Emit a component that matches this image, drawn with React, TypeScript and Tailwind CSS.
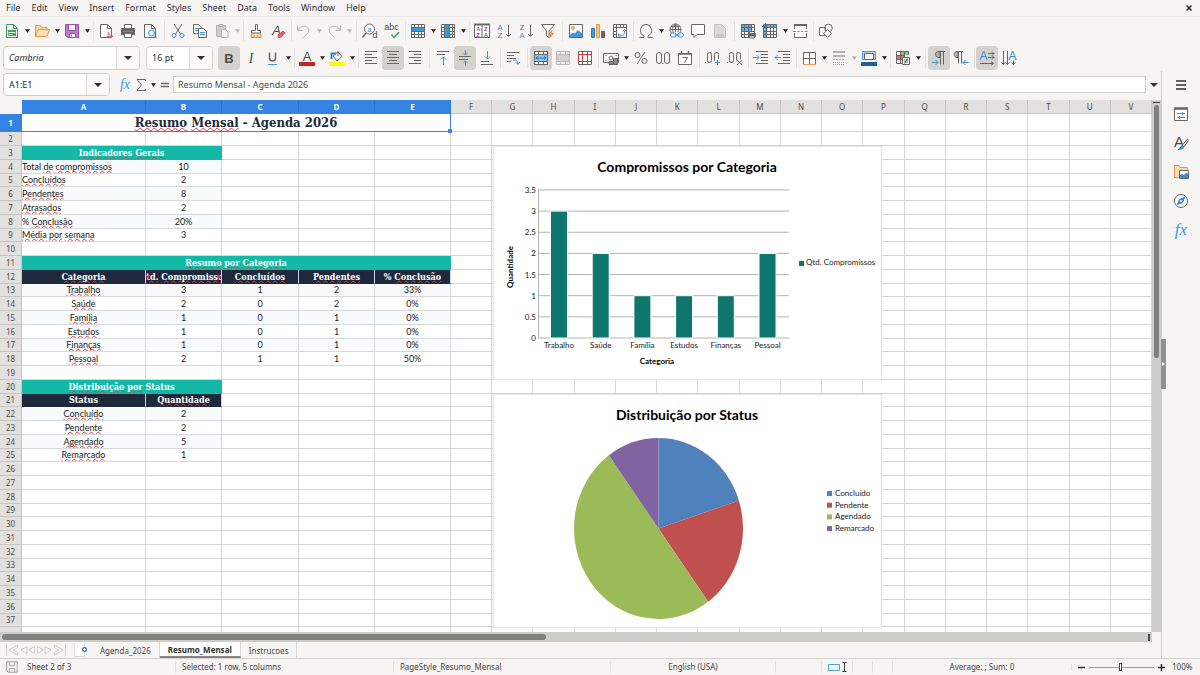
import { useState } from "react";
import type { ReactNode } from "react";
import clsx from "clsx";

const menus = ["File", "Edit", "View", "Insert", "Format", "Styles", "Sheet", "Data", "Tools", "Window", "Help"];
const columns = "ABCDEFGHIJKLMNOPQRSTUV".split("");

type Cell = { text: string; span?: number; kind?: "title" | "band" | "head" | "body" | "left" };

const body = (...values: string[]): Cell[] => values.map((text) => ({ text, kind: "body" }));
const head = (...values: string[]): Cell[] => values.map((text) => ({ text, kind: "head" }));
const indicator = (label: string, value: string): Cell[] => [
  { text: label, kind: "left" },
  { text: value, kind: "body" },
];

// words that start with ~ get the spell check line
const sheet: Record<number, Cell[]> = {
  1: [{ text: "~Resumo ~Mensal - Agenda 2026", span: 5, kind: "title" }],
  3: [{ text: "~Indicadores ~Gerais", span: 2, kind: "band" }],
  4: indicator("Total ~de ~compromissos", "10"),
  5: indicator("~Concluídos", "2"),
  6: indicator("~Pendentes", "8"),
  7: indicator("~Atrasados", "2"),
  8: indicator("% ~Conclusão", "20%"),
  9: indicator("~Média ~por ~semana", "3"),
  11: [{ text: "~Resumo ~por ~Categoria", span: 5, kind: "band" }],
  12: head("~Categoria", "~Qtd. ~Compromissos", "~Concluídos", "~Pendentes", "% ~Conclusão"),
  13: body("~Trabalho", "3", "1", "2", "33%"),
  14: body("~Saúde", "2", "0", "2", "0%"),
  15: body("~Família", "1", "0", "1", "0%"),
  16: body("~Estudos", "1", "0", "1", "0%"),
  17: body("~Finanças", "1", "0", "1", "0%"),
  18: body("~Pessoal", "2", "1", "1", "50%"),
  20: [{ text: "~Distribuição ~por Status", span: 2, kind: "band" }],
  21: head("Status", "~Quantidade"),
  22: body("~Concluído", "2"),
  23: body("~Pendente", "2"),
  24: body("~Agendado", "5"),
  25: body("~Remarcado", "1"),
};

const tinted = [4, 6, 8, 13, 15, 17, 22, 24];

const Icon = ({ children, size = "size-4" }: { children: ReactNode; size?: string }) => (
  <svg viewBox="0 0 16 16" className={clsx("overflow-visible", size)} fill="none" stroke="#686766" strokeWidth="1" aria-hidden="true">
    {children}
  </svg>
);

const Glyph = ({ x, y, s, fill = "#4d4c4b", children, bold, italic, serif }: any) => (
  <text
    x={x}
    y={y}
    fontSize={s}
    fill={fill}
    stroke="none"
    textAnchor="middle"
    fontWeight={bold ? 700 : 400}
    fontStyle={italic ? "italic" : "normal"}
    fontFamily={serif ? "Liberation Serif, serif" : "Liberation Sans, sans-serif"}
  >
    {children}
  </text>
);

const Tool = ({ label, on, children }: { label: string; on?: boolean; children: ReactNode }) => (
  <button
    aria-label={label}
    className={clsx("flex h-6 w-[22px] shrink-0 items-center justify-center rounded", on && "bg-[#d5d2ce]")}
  >
    {children}
  </button>
);

const Drop = ({ label, off }: { label: string; off?: boolean }) => (
  <button aria-label={label + " options"} className="flex h-6 w-2 shrink-0 items-center justify-center">
    <svg viewBox="0 0 6 4" className="h-1 w-[5px]" fill={off ? "#b4b3b1" : "#1c1c1c"}>
      <path d="M0 0h6L3 4z" />
    </svg>
  </button>
);

const Sep = ({ wide }: { wide?: boolean }) => (
  <span className={clsx("flex h-5 shrink-0 justify-center", wide ? "w-1.5" : "w-1")}>
    <span className="w-px bg-[#e3e1df]" />
  </span>
);

const Caret = () => (
  <svg viewBox="0 0 8 4" className="h-1 w-2" fill="#2e2e2e">
    <path d="M0 0h8L4 4z" />
  </svg>
);

const Combo = ({ label, value, className, italic }: { label: string; value: string; className: string; italic?: boolean }) => (
  <div className={clsx("flex shrink-0 overflow-hidden rounded border border-[#cfccc9] bg-white", className)}>
    <input
      aria-label={label}
      defaultValue={value}
      className={clsx("min-w-0 flex-1 bg-transparent pl-[5px] text-[#2b2b2b] outline-none", italic && "italic")}
    />
    <button aria-label={label + " list"} className="flex w-[23px] items-center justify-center border-l border-[#dbd9d6] bg-[#faf9f8]">
      <Caret />
    </button>
  </div>
);

const Lines = ({ rows }: { rows: [number, number][] }) => (
  <path d={rows.map(([from, to], i) => `M${from} ${1.5 + i * 3}H${to}`).join("")} />
);

const GridBase = () => (
  <path d="M1.5 1.5h13v13h-13zM1.5 4.5h13M1.5 8.5h13M1.5 11.5h13M4.5 1.5v13M8.5 1.5v13M11.5 1.5v13" />
);

const StandardBar = () => (
  <div className="flex h-[27px] items-center overflow-hidden pl-px">
    <Tool label="New">
      <Icon>
        <path stroke="#3b9b5c" d="M2.5 1.5h7l4 4v9h-11zM9.5 1.5v4h4" fill="#f3faf5" />
        <path stroke="none" fill="#3ba35d" d="M4 7h8v6H4z" />
        <path stroke="#dff3e5" d="M4.5 9.5h7M4.5 11.5h4" />
      </Icon>
    </Tool>
    <Drop label="New" />
    <Tool label="Open">
      <Icon>
        <path stroke="#dd9a4e" fill="#fbd9a5" d="M1.5 13.5v-11h5l1.5 2h5v2" />
        <path stroke="#dd9a4e" fill="#fcdfae" d="M1.5 13.5l2.500-7h11.500l-2.500 7z" />
      </Icon>
    </Tool>
    <Drop label="Open" />
    <Tool label="Save">
      <Icon>
        <path stroke="#9b4fb0" fill="#c078d0" d="M1.5 1.5h13v13h-11l-2-2z" />
        <path stroke="#9b4fb0" fill="#fff" d="M4.5 1.5h7v6h-7z" />
        <path stroke="#9b4fb0" fill="#fff" d="M5.5 10.5h6v4h-6z" />
        <path stroke="#9b4fb0" d="M7.5 11.5v2" />
      </Icon>
    </Tool>
    <Drop label="Save" />
    <Sep />
    <Tool label="Export as PDF">
      <Icon>
        <path fill="#fff" d="M2.5 1.5h7l4 4v9h-11zM9.5 1.5v4h4" />
        <path stroke="#e0606c" fill="#f6f5f3" d="M8 14.5c2-1 3-3 2.500-5 0-1.500-1-1 0 1s3 3.500 4.500 3c1-1-4.500-.5-7 1z" />
      </Icon>
    </Tool>
    <Tool label="Print">
      <Icon>
        <path fill="#fff" d="M4.5 5v-3.500h7V5" />
        <path fill="#686766" d="M1.5 5.5h13v6h-13z" />
        <path stroke="#4199dc" d="M3 8.5h10" />
        <path fill="#fff" d="M4.5 10.5h7v4h-7z" />
      </Icon>
    </Tool>
    <Tool label="Print Preview">
      <Icon>
        <path fill="#fff" d="M2.5 1.5h7l4 4v9h-11zM9.5 1.5v4h4" />
        <circle cx="9.5" cy="10" r="3" stroke="#3d98db" fill="#e3f1fb" />
        <path stroke="#3d98db" d="M11.5 12l3 3" />
      </Icon>
    </Tool>
    <Sep wide />
    <Tool label="Cut">
      <Icon>
        <path d="M4 1l6.500 10M12 1L5.500 11" />
        <circle cx="4" cy="12.5" r="2" stroke="#2f8fd8" />
        <circle cx="12" cy="12.5" r="2" stroke="#2f8fd8" />
      </Icon>
    </Tool>
    <Tool label="Copy">
      <Icon>
        <path fill="#fff" d="M1.5 1.5h5l3 3v6h-8z" />
        <path stroke="#4199dc" d="M3 5.5h4M3 7.5h4" />
        <path fill="#fff" d="M6.5 5.5h5l3 3v6h-8z" />
        <path stroke="#4199dc" d="M8 9.5h5M8 11.5h5" />
      </Icon>
    </Tool>
    <Tool label="Paste">
      <Icon>
        <path stroke="#b5b3b1" fill="#cfcdcb" d="M2.5 2.5h9v11h-9z" />
        <path stroke="#b5b3b1" fill="#f6f5f3" d="M5 1.5h4v2H5zM7.5 6.5h4l2.500 2.500v5.500H7.500z" />
      </Icon>
    </Tool>
    <Drop label="Paste" off />
    <Sep />
    <Tool label="Clone Formatting">
      <Icon>
        <path fill="#fff" d="M7.5 1.5h2v6h3v2.500h-9V7.500h4z" />
        <path stroke="#de8a3c" fill="#fbd7ae" d="M3.5 10.5h9l.5 4H3z" />
        <path stroke="#de8a3c" d="M6 12.5v2M9.5 12.5v2" />
      </Icon>
    </Tool>
    <Tool label="Clear Direct Formatting">
      <Icon>
        <Glyph x="6.5" y="12" s="13" italic>A</Glyph>
        <path stroke="#d8475a" fill="#ec5f70" d="M8 12l5-4 2 2-4.500 4.500H8.500z" />
      </Icon>
    </Tool>
    <Sep />
    <Tool label="Undo">
      <Icon>
        <path stroke="#b5b3b1" d="M1.5 2.5v5h5M2 7c2-4 7-5 9.500-2.500S12.500 10 7.500 14.500" />
      </Icon>
    </Tool>
    <Drop label="Undo" off />
    <Tool label="Redo">
      <Icon>
        <path stroke="#b5b3b1" d="M14.5 2.5v5h-5M14 7c-2-4-7-5-9.500-2.500S3.500 10 8.500 14.500" />
      </Icon>
    </Tool>
    <Drop label="Redo" off />
    <Sep wide />
    <Tool label="Find and Replace">
      <Icon>
        <circle cx="7.5" cy="6" r="5" fill="#fff" />
        <path strokeWidth="1.5" d="M4 10l-3.500 4.500" />
        <Glyph x="7.5" y="8.5" s="8" fill="#2f8fd8">a</Glyph>
        <Glyph x="13" y="15" s="9">d</Glyph>
      </Icon>
    </Tool>
    <Tool label="Spelling">
      <Icon>
        <Glyph x="7.5" y="6.5" s="9">abc</Glyph>
        <path stroke="#3aa55f" strokeWidth="1.5" d="M7.5 11.5l2.500 3 5-5.500" />
      </Icon>
    </Tool>
    <Sep />
    <Tool label="Row">
      <Icon>
        <path stroke="none" fill="#3d98db" d="M1 4h14v5H1z" />
        <path d="M1.5 1.5h13v13h-13zM1.5 4.5h13M1.5 8.5h13M1.5 11.5h13M4.5 1.5v3M8.5 1.5v3M11.5 1.5v3M4.5 8.5v6M8.5 8.5v6M11.5 8.5v6" />
      </Icon>
    </Tool>
    <Drop label="Row" />
    <Tool label="Column">
      <Icon>
        <path stroke="none" fill="#3d98db" d="M5 1h5v14H5z" />
        <path d="M1.5 1.5h13v13h-13zM1.5 4.5h3M1.5 8.5h3M1.5 11.5h3M9.5 4.5h5M9.5 8.5h5M9.5 11.5h5M4.5 1.5v13M9.5 1.5v13M12.5 1.5v13" />
      </Icon>
    </Tool>
    <Drop label="Column" />
    <Sep />
    <Tool label="Sort">
      <Icon>
        <path fill="#fff" d="M.5 1.5h15v13H.5zM8 1.5v13" />
        <path strokeWidth="2" d="M0 1.500h16" />
        <Glyph x="4.2" y="8" s="6" fill="#2f8fd8" bold>A</Glyph>
        <Glyph x="4.2" y="14" s="6" fill="#a23dbb" bold>Z</Glyph>
        <Glyph x="11.8" y="8" s="6" fill="#a23dbb" bold>Z</Glyph>
        <Glyph x="11.8" y="14" s="6" fill="#2f8fd8" bold>A</Glyph>
      </Icon>
    </Tool>
    <Tool label="Sort Ascending">
      <Icon>
        <Glyph x="4" y="6.5" s="7.5" fill="#2f8fd8">A</Glyph>
        <Glyph x="4" y="15" s="7.5" fill="#a23dbb">Z</Glyph>
        <path d="M12.5 2v11.500M10 11l2.500 2.500L15 11" />
      </Icon>
    </Tool>
    <Tool label="Sort Descending">
      <Icon>
        <Glyph x="4" y="6.5" s="7.5" fill="#a23dbb">Z</Glyph>
        <Glyph x="4" y="15" s="7.5" fill="#2f8fd8">A</Glyph>
        <path d="M12.5 2v11.500M10 11l2.500 2.500L15 11" />
      </Icon>
    </Tool>
    <Tool label="AutoFilter">
      <Icon>
        <path fill="#fff" d="M1.5 1.5h13L9 8v6.500l-2.500-2V8z" />
        <path stroke="#e09238" fill="#f7b45d" d="M12 7.5L8.500 12h2l-1 3 4-4.500h-2z" />
      </Icon>
    </Tool>
    <Sep wide />
    <Tool label="Insert Image">
      <Icon>
        <path fill="#fff" d="M1.5 1.5h13v13h-13z" />
        <path stroke="none" fill="#3d98db" d="M2 12l3-2.500 1.500 1L10 7l4 3.500V14H2z" />
        <circle cx="5" cy="5" r="1.5" stroke="#e6a04a" fill="#f8c77e" />
      </Icon>
    </Tool>
    <Tool label="Insert Chart">
      <Icon>
        <path stroke="#2b7fc4" fill="#3d98db" d="M1.5 5.5h3v9h-3z" />
        <path stroke="#de9a46" fill="#f9c67c" d="M6.5 1.5h3v13h-3z" />
        <path fill="#686766" d="M11.5 8.5h3v6h-3z" />
      </Icon>
    </Tool>
    <Tool label="Insert Pivot Table">
      <Icon>
        <path fill="#fff" d="M1.5 1.5h13v13h-13z" />
        <path d="M1.5 4.5h13M4.5 1.5v13M8.5 1.5v3M11.5 1.5v3M1.5 8.5h3M1.5 11.5h3" />
        <path stroke="#3d98db" d="M6.5 10.5v2.500h2.500c3 0 3.500-2 3.500-5M10.500 8.500l2-2 2 2M8.500 11l-2 2" />
      </Icon>
    </Tool>
    <Sep />
    <Tool label="Special Character">
      <Icon>
        <path d="M1.5 14.5H6v-1.500C3 11.500 2.500 9.500 2.500 7.500c0-3.500 2.500-6 5.500-6s5.500 2.500 5.500 6c0 2-.5 4-3.500 5.500v1.500h4.500" />
      </Icon>
    </Tool>
    <Drop label="Special Character" />
    <Tool label="Hyperlink">
      <Icon>
        <circle cx="7.5" cy="6.5" r="5.5" />
        <path d="M2 6.5h11M7.5 1v8M3 3.5h9M5.5 10c-1.500-3-1.500-6 2-9 3.500 3 3.500 5 2.500 8" />
        <rect x="2.5" y="10" width="6" height="4" rx="2" stroke="#3d98db" fill="#f6f5f3" />
        <rect x="9.5" y="10" width="6" height="4" rx="2" stroke="#3d98db" fill="#f6f5f3" />
        <path stroke="#3d98db" d="M6.5 12h5" />
      </Icon>
    </Tool>
    <Tool label="Comment">
      <Icon>
        <path fill="#fff" d="M1.5 1.5h13v10H7l-3 3v-3H1.500z" />
      </Icon>
    </Tool>
    <Tool label="Headers and Footers">
      <Icon>
        <path stroke="#c4c2c0" fill="#dcdad8" d="M2.5 1.5h7l4 4v9h-11z" />
        <path stroke="#c4c2c0" d="M4 12.5h8" strokeWidth="2" />
      </Icon>
    </Tool>
    <Sep wide />
    <Tool label="Define Print Area">
      <Icon>
        <path stroke="none" fill="#5fb0e8" d="M1 1h10v7H1z" />
        <GridBase />
        <path fill="#686766" d="M8.5 10.5h7v3h-7z" />
        <path fill="#fff" d="M9.5 8.5h5v2h-5zM9.5 13h5v2h-5z" />
      </Icon>
    </Tool>
    <Tool label="Freeze Rows and Columns">
      <Icon>
        <path stroke="none" fill="#5fb0e8" d="M2 1h13v4H5v10H2z" />
        <GridBase />
        <path stroke="#2677bd" d="M0 3.5h4M3.5 0v4" />
      </Icon>
    </Tool>
    <Drop label="Freeze Rows and Columns" />
    <Tool label="Split Window">
      <Icon>
        <path fill="#fff" stroke="none" d="M2 2h12v12H2z" />
        <path d="M2.5 6V1.500h12V6M2.500 10v4.500h12V10" />
        <path strokeWidth="2" d="M2 2h13" />
        <path stroke="#3d98db" d="M1 8.5h3M5.5 8.5h2M9 8.5h2M12.5 8.5h3" />
      </Icon>
    </Tool>
    <Sep />
    <Tool label="Show Draw Functions">
      <Icon>
        <path d="M1.5 4.5h6v8h-6z" />
        <circle cx="10.5" cy="5" r="3.8" />
        <path fill="#f6f5f3" d="M9.5 6.5l4 4-4 4-4-4z" />
      </Icon>
    </Tool>
  </div>
);

const FormattingBar = () => (
  <div className="flex h-[27px] items-center overflow-hidden pl-[3px]">
    <Combo label="Font Name" value="Cambria" italic className="mr-1.5 h-6 w-[137px]" />
    <Combo label="Font Size" value="16 pt" className="mr-[5px] h-6 w-[67px]" />
    <Tool label="Bold" on>
      <Icon><Glyph x="8" y="12.5" s="13" bold>B</Glyph></Icon>
    </Tool>
    <Tool label="Italic">
      <Icon><Glyph x="8" y="12.5" s="14" italic serif>I</Glyph></Icon>
    </Tool>
    <Tool label="Underline">
      <Icon>
        <path strokeWidth="1.5" d="M4.5 2.5v5.500c0 4 6 4 6 0V2.500" />
        <path stroke="#3d98db" d="M3 14.5h9" />
      </Icon>
    </Tool>
    <Drop label="Underline" />
    <Sep />
    <Tool label="Font Color">
      <Icon>
        <Glyph x="8" y="11" s="13">A</Glyph>
        <path stroke="#c9211e" strokeWidth="4" d="M0 14h16" />
      </Icon>
    </Tool>
    <Drop label="Font Color" />
    <Tool label="Highlighting">
      <Icon>
        <path fill="#fff" d="M4 6l5-4 4 4.500-5 4.500z" />
        <path d="M9 1v5" />
        <path stroke="#2b7fc4" strokeWidth="1.8" d="M2.5 9V3.500H7" />
        <path stroke="#ffff00" strokeWidth="4" d="M0 14h16" />
      </Icon>
    </Tool>
    <Drop label="Highlighting" />
    <Sep />
    <Tool label="Align Left">
      <Icon><Lines rows={[[2, 14], [2, 9], [2, 14], [2, 9], [2, 14]]} /></Icon>
    </Tool>
    <Tool label="Center Horizontally" on>
      <Icon><Lines rows={[[2, 14], [4, 12], [2, 14], [4, 12], [2, 14]]} /></Icon>
    </Tool>
    <Tool label="Align Right">
      <Icon><Lines rows={[[2, 14], [7, 14], [2, 14], [7, 14], [2, 14]]} /></Icon>
    </Tool>
    <Sep wide />
    <Tool label="Align Top">
      <Icon>
        <path d="M2 1.5h12M2 4.5h8" />
        <path stroke="#3d98db" d="M8.5 15V7M6 9.5L8.500 7l2.500 2.500" />
      </Icon>
    </Tool>
    <Tool label="Center Vertically" on>
      <Icon>
        <path d="M2 6.5h12M2 9.5h9" />
        <path stroke="#3d98db" d="M8.5 0v5M6.5 3l2 2 2-2M8.500 16v-5M6.500 13l2-2 2 2" />
      </Icon>
    </Tool>
    <Tool label="Align Bottom">
      <Icon>
        <path d="M2 11.5h8M2 14.5h12" />
        <path stroke="#3d98db" d="M8.5 1v8M6 6.5L8.500 9 11 6.500" />
      </Icon>
    </Tool>
    <Sep />
    <Tool label="Wrap Text">
      <Icon>
        <path d="M2 2.5h12M2 5.5h7M2 8.5h9M2 11.5h4" />
        <path stroke="#3d98db" d="M8 10.5c3-1 4.500 0 5 3.500M10.500 12l2.500 2.500 2-2.500" />
      </Icon>
    </Tool>
    <Sep wide />
    <Tool label="Merge and Center Cells" on>
      <Icon>
        <path fill="#fff" d="M1.5 1.5h13v13h-13z" />
        <path stroke="none" fill="#8cc6f0" d="M2 5h12v6H2z" />
        <path d="M1.5 1.5h13v13h-13zM1.5 4.5h13M1.5 11.5h13M5.5 1.5v3M10.5 1.5v3M5.5 11.5v3M10.5 11.5v3" />
        <path stroke="#2476bb" d="M3 8h10M5 6.5L3 8l2 1.500M11 6.500L13 8l-2 1.500" />
      </Icon>
    </Tool>
    <Tool label="Merge Cells">
      <Icon>
        <path stroke="none" fill="#d4d2d0" d="M2 5h12v6H2z" />
        <path stroke="#bbb9b7" d="M1.5 1.5h13v13h-13zM1.5 4.5h13M1.5 11.5h13M5.5 1.5v3M10.5 1.5v3M5.5 11.5v3M10.5 11.5v3" />
      </Icon>
    </Tool>
    <Tool label="Unmerge Cells">
      <Icon>
        <path fill="#fff" d="M1.5 1.5h13v13h-13zM5.5 1.5v3M10.5 1.5v3M5.5 11.5v3M10.5 11.5v3" />
        <path stroke="#d8383f" d="M1.5 4.5h13v7h-13zM5.5 4.5v7M10.5 4.5v7" />
      </Icon>
    </Tool>
    <Sep />
    <Tool label="Format as Currency">
      <Icon>
        <path fill="#fff" d="M.5 3.5h15v9H.5z" />
        <circle cx="8" cy="8" r="2" />
        <path d="M2.5 5.5h1M12.5 5.5h1M2.5 10.5h1" />
        <path fill="#8a8987" d="M6 11.5h4v3H6zM10.5 8.5h4v6h-4z" />
      </Icon>
    </Tool>
    <Drop label="Format as Currency" />
    <Tool label="Format as Percent">
      <Icon>
        <circle cx="4.5" cy="5" r="2.5" />
        <circle cx="11.5" cy="11" r="2.5" />
        <path d="M12 2L4 14" />
      </Icon>
    </Tool>
    <Tool label="Format as Number">
      <Icon>
        <rect x="1.5" y="2.5" width="5" height="11" rx="2.5" />
        <rect x="9.5" y="2.5" width="5" height="11" rx="2.5" />
        <path d="M7.5 13.5h1" />
      </Icon>
    </Tool>
    <Tool label="Format as Date">
      <Icon>
        <path fill="#fff" d="M1.5 3.5h13v11h-13z" />
        <path strokeWidth="1.5" d="M1.5 4h13M4.5 1v3M11.5 1v3" />
        <path d="M5.5 7.5h5L7.500 13" />
      </Icon>
    </Tool>
    <Sep wide />
    <Tool label="Add Decimal Place">
      <Icon>
        <rect x="2.5" y="2.5" width="4" height="10" rx="2" />
        <rect x="9.5" y="2.5" width="4" height="10" rx="2" />
        <path d="M0 12.5h1" />
        <path stroke="#f6f5f3" strokeWidth="3" d="M9 12.5h7M12.5 9v6" />
        <path stroke="#2f8fd8" d="M10 12.5h5M12.5 10v5" />
      </Icon>
    </Tool>
    <Tool label="Delete Decimal Place">
      <Icon>
        <rect x="2.5" y="2.5" width="4" height="10" rx="2" />
        <rect x="9.5" y="2.5" width="4" height="10" rx="2" />
        <path d="M0 12.5h1" />
        <path stroke="#f6f5f3" strokeWidth="3" d="M10 10l5 5M15 10l-5 5" />
        <path stroke="#e03c44" d="M10 10l5 5M15 10l-5 5" />
      </Icon>
    </Tool>
    <Sep />
    <Tool label="Increase Indent">
      <Icon>
        <path d="M3 1.5h12M8 4.5h7M8 7.5h7M8 10.5h7M3 13.5h12" />
        <path stroke="#3d98db" d="M0 7.5h6M3.500 5L6 7.500 3.500 10" />
      </Icon>
    </Tool>
    <Tool label="Decrease Indent">
      <Icon>
        <path d="M3 1.5h12M8 4.5h7M8 7.5h7M8 10.5h7M3 13.5h12" />
        <path stroke="#3d98db" d="M0 7.5h6M2.500 5L0 7.500 2.500 10" />
      </Icon>
    </Tool>
    <Sep />
    <Tool label="Borders">
      <Icon>
        <path fill="#fff" d="M2.5 14V2.500h12V14M8.500 2.500V14M2.500 8.500h12" />
        <path stroke="#e8a35b" d="M2 14.5h13" />
      </Icon>
    </Tool>
    <Drop label="Borders" />
    <Tool label="Border Style">
      <Icon>
        <path stroke="#b5b3b1" strokeWidth="2" d="M2 2h12M2 6h12" />
        <path stroke="#b5b3b1" strokeDasharray="2 1" d="M2 9.5h12" />
        <path stroke="#b5b3b1" strokeDasharray="1 1" d="M2 12.5h12M2 14.5h12" />
      </Icon>
    </Tool>
    <Drop label="Border Style" off />
    <Tool label="Border Color">
      <Icon>
        <path stroke="#3d98db" fill="#cbd5de" d="M1.5 1.5h13v8h-13z" />
        <path fill="#fff" d="M3.500 3.500h9v6h-9z" />
        <path stroke="#1f5fa0" strokeWidth="4" d="M0 14h16" />
      </Icon>
    </Tool>
    <Drop label="Border Color" />
    <Sep />
    <Tool label="Conditional Formatting">
      <Icon>
        <path stroke="none" fill="#7cc48f" d="M5 1h9v4H5z" />
        <path stroke="none" fill="#e8686c" d="M1 5h4v5H1zM5 5h4v4H5z" />
        <path d="M1.5 1.5h12v3M1.5 1.5v12h6M1.5 5.5h8M1.5 9.5h6M5.5 1.5v12M9.5 1.5V7" />
        <path fill="#fff" d="M7.5 7.5h7v7h-7z" />
        <path d="M9 10h4M9 12h4M12.5 8.5l-3 5" />
      </Icon>
    </Tool>
    <Drop label="Conditional Formatting" />
    <Sep wide />
    <Tool label="Left-To-Right" on>
      <Icon>
        <path fill="#b3b1ae" d="M9 1.5H7C3.500 1.500 3.500 7.500 8 7.500h1z" />
        <path d="M7 1.5h7M9.5 1.5v13M12.5 1.5v13" />
        <path stroke="#2f8fd8" d="M1 12.5h5.500M4.500 10l2.500 2.500L4.500 15" />
      </Icon>
    </Tool>
    <Tool label="Right-To-Left">
      <Icon>
        <path fill="#b3b1ae" d="M5 1.5H4C0 1.500 .5 7.500 4 7.500h1z" />
        <path d="M4 1.5h6M5.5 1.5v12M8.500 1.500v12" />
        <path stroke="#2f8fd8" d="M10 12.5h5.500M12.500 10L10 12.500l2.500 2.500" />
      </Icon>
    </Tool>
    <Sep />
    <Tool label="Text direction from left to right" on>
      <Icon>
        <Glyph x="4.5" y="9.5" s="12" fill="#2f8fd8">A</Glyph>
        <path d="M9 3.5h6M13 1.5l2 2-2 2M9 7.5h6M13 5.5l2 2-2 2M1 13.5h13.500M12 11.500l2.500 2-2.500 2" />
      </Icon>
    </Tool>
    <Tool label="Text direction from top to bottom">
      <Icon>
        <Glyph x="11.5" y="9.5" s="12" fill="#2f8fd8">A</Glyph>
        <path d="M2.5 1v13.500M.5 12.500l2 2 2-2M6.500 1v13.500M4.500 12.500l2 2 2-2M12.500 10.500v4M10.500 12.500l2 2 2-2" />
      </Icon>
    </Tool>
  </div>
);

const FormulaBar = () => (
  <div className="flex h-[29px] shrink-0 items-center pb-0.5 pl-[3px]">
    <Combo label="Name Box" value="A1:E1" className="mr-[7px] h-[23px] w-[107px]" />
    <button aria-label="Function Wizard" className="flex w-4 justify-center">
      <Icon><Glyph x="8" y="12" s="14" fill="#3d98db" italic serif>fx</Glyph></Icon>
    </button>
    <button aria-label="Select Function" className="flex w-4 justify-center">
      <Icon>
        <path d="M12.5 4V2.500H4L8.500 8 4 13.500h8.500V12" />
      </Icon>
    </button>
    <Drop label="Select Function" />
    <button aria-label="Formula" className="flex w-4 justify-center">
      <Icon><path strokeWidth="1.5" d="M4 6.5h8M4 9.5h8" /></Icon>
    </button>
    <input
      aria-label="Input line"
      defaultValue="Resumo Mensal - Agenda 2026"
      className="h-[17px] min-w-0 flex-1 border border-[#d4d2d0] bg-white pl-1 text-[#4a4a4a] outline-none"
    />
    <button aria-label="Expand Formula Bar" className="flex w-[15px] justify-center">
      <Caret />
    </button>
  </div>
);

const Spelled = ({ text }: { text: string }) => (
  <>
    {text.split(" ").map((word, i) => (
      <span key={i}>
        {i > 0 && " "}
        {word.startsWith("~") ? (
          <span className="underline decoration-[#e0383e] decoration-wavy decoration-1 underline-offset-0 [text-decoration-skip-ink:none]">
            {word.slice(1)}
          </span>
        ) : (
          word
        )}
      </span>
    ))}
  </>
);

const cellStyles = {
  title: "border-[#3584e4] font-['DejaVu_Serif_Condensed','DejaVu_Serif',serif] text-[13px] leading-[17px] font-bold text-[#1e293b]",
  band: "border-[#14b8a6] bg-[#14b8a6] font-['DejaVu_Serif_Condensed','DejaVu_Serif',serif] text-[9px] leading-[12px] font-bold text-white",
  head: "border-[#cbd5e1] border-b-[#1e293b] bg-[#1e293b] font-['DejaVu_Serif_Condensed','DejaVu_Serif',serif] text-[9px] leading-[12px] font-bold text-white",
  body: "border-[#d5d8dc] font-[Lato,sans-serif] text-[9px] leading-[12px] text-[#222]",
  left: "border-[#d5d8dc] font-[Lato,sans-serif] text-[9px] leading-[12px] text-[#222]",
};

const Row = ({ n }: { n: number }) => {
  const cells = sheet[n] ?? [];
  const used = cells.reduce((sum, c) => sum + (c.span ?? 1), 0);
  return (
    <tr className={clsx(n === 1 ? "h-[18px]" : n % 4 === 1 ? "h-[13px]" : "h-[14px]")}>
      <th
        scope="row"
        className={clsx(
          "border-r border-b p-0 text-center text-[8px] leading-[12px]",
          n === 1 ? "border-[#3584e4] bg-[#3584e4] font-bold text-white" : "border-[#c6c5c3] bg-[#e2e1df] font-normal text-[#4b4a49]",
        )}
      >
        {n < 38 && n}
      </th>
      {cells.map((cell, i) => (
        <td
          key={i}
          colSpan={cell.span}
          className={clsx(
            "relative border-r border-b p-0",
            cellStyles[cell.kind ?? "body"],
            tinted.includes(n) && "bg-[#f8fafc]",
          )}
        >
          <div className={clsx("flex overflow-hidden whitespace-pre", n === 1 ? "h-[17px]" : "h-[12px]", cell.kind !== "left" && "justify-center")}>
            <span className="shrink-0">
              <Spelled text={cell.text} />
            </span>
          </div>
          {cell.kind === "title" && (
            <span className="absolute -right-0.5 -bottom-0.5 size-1 bg-[#3584e4]" />
          )}
          {cell.text.includes("Qtd") && (
            <>
              <svg viewBox="0 0 3 6" className="absolute top-1 left-0 h-1.5 w-[3px]" fill="#e0383e"><path d="M3 0v6L0 3z" /></svg>
              <svg viewBox="0 0 3 6" className="absolute top-1 right-0 h-1.5 w-[3px]" fill="#e0383e"><path d="M0 0v6l3-3z" /></svg>
            </>
          )}
        </td>
      ))}
      {columns.slice(used).map((c) => (
        <td key={c} className="border-r border-b border-[#d4d4d4] p-0" />
      ))}
    </tr>
  );
};

const Grid = () => (
  <table className="w-full table-fixed border-separate border-spacing-0 bg-white">
    <colgroup>
      <col className="w-[22px]" />
      <col className="w-[124px]" />
      <col className="w-[76px]" />
      <col className="w-[77px]" />
      <col className="w-[76px]" />
      <col className="w-[76px]" />
      {columns.slice(5).map((c) => (
        <col key={c} />
      ))}
    </colgroup>
    <thead>
      <tr className="h-[14px]">
        <td className="bg-[#f6f5f3] p-0" />
        {columns.map((c, i) => (
          <th
            key={c}
            scope="col"
            className={clsx(
              "border-r border-b p-0 text-center text-[8px] leading-[12px]",
              i < 5 ? "border-r-[#2c74cc] border-b-[#3584e4] bg-[#3584e4] font-bold text-white" : "border-[#c6c5c3] bg-[#e2e1df] font-normal text-[#4b4a49]",
            )}
          >
            {c}
          </th>
        ))}
      </tr>
    </thead>
    <tbody>
      {Array.from({ length: 38 }, (_, i) => (
        <Row key={i} n={i + 1} />
      ))}
    </tbody>
  </table>
);

const bars: [string, number][] = [
  ["Trabalho", 3],
  ["Saúde", 2],
  ["Família", 1],
  ["Estudos", 1],
  ["Finanças", 1],
  ["Pessoal", 2],
];

const BarChart = () => {
  const y = (v: number) => 192 - v * 42.3;
  return (
    <svg viewBox="0 0 389 234" className="absolute top-[46px] left-[493px] h-[234px] w-[389px] bg-white font-[Lato,sans-serif] text-[8px]" fill="#222">
      <rect x=".5" y=".5" width="388" height="233" fill="none" stroke="#e2e2e2" />
      <text x="194" y="26" textAnchor="middle" className="text-[14px] font-bold" fill="#000">Compromissos por Categoria</text>
      {[0, 0.5, 1, 1.5, 2, 2.5, 3, 3.5].map((v) => (
        <g key={v}>
          <path d={`M45 ${y(v)}H296`} stroke="#b3b3b3" />
          <text x="43" y={y(v) + 3} textAnchor="end">{v}</text>
        </g>
      ))}
      <path d="M45.5 44V192" stroke="#b3b3b3" />
      {bars.map(([name, v], i) => (
        <g key={name}>
          <rect x={57.5 + i * 41.7} y={y(v)} width="17" height={v * 42.3} fill="#0f766e" stroke="#fff" />
          <text x={66 + i * 41.7} y="202" textAnchor="middle">{name}</text>
        </g>
      ))}
      <text x="164" y="218" textAnchor="middle" className="font-bold" fill="#000">Categoria</text>
      <text transform="translate(20 121) rotate(-90)" textAnchor="middle" className="font-bold" fill="#000">Quantidade</text>
      <rect x="306" y="115" width="5" height="5" fill="#0f766e" />
      <text x="313" y="119">Qtd. Compromissos</text>
    </svg>
  );
};

const slices: [string, number, string][] = [
  ["Concluído", 2, "#4f81bd"],
  ["Pendente", 2, "#c0504d"],
  ["Agendado", 5, "#9bbb59"],
  ["Remarcado", 1, "#8064a2"],
];

const PieChart = () => {
  const point = (share: number) => {
    const a = share * Math.PI * 2;
    return `${165.5 + 84.5 * Math.sin(a)} ${134.5 - 90.5 * Math.cos(a)}`;
  };
  let sum = 0;
  return (
    <svg viewBox="0 0 389 234" className="absolute top-[294px] left-[493px] h-[234px] w-[389px] bg-white font-[Lato,sans-serif] text-[8px]" fill="#222">
      <rect x=".5" y=".5" width="388" height="233" fill="none" stroke="#e2e2e2" />
      <text x="194" y="26" textAnchor="middle" className="text-[14px] font-bold" fill="#000">Distribuição por Status</text>
      {slices.map(([name, v, color], i) => {
        const from = sum / 10;
        sum += v;
        return (
          <g key={name}>
            <path d={`M165.5 134.5L${point(from)}A84.5 90.5 0 0 1 ${point(sum / 10)}z`} fill={color} />
            <rect x="334" y={97 + i * 11.7} width="5" height="5" fill={color} />
            <text x="342" y={102 + i * 11.7}>{name}</text>
          </g>
        );
      })}
    </svg>
  );
};

const Sidebar = () => (
  <aside className="relative flex w-[39px] shrink-0 flex-col items-center gap-[13px] border-l border-[#cfcdcb] pt-1.5">
    <button aria-label="Sidebar Settings">
      <Icon><path stroke="#2e2e2e" strokeWidth="1.5" d="M3 4h10M3 8h10M3 12h10" /></Icon>
    </button>
    <button aria-label="Properties">
      <Icon>
        <path fill="#fff" d="M1.5 2.5h13v12h-13z" />
        <path strokeWidth="2.5" d="M1 2.5h14" />
        <path stroke="#3d98db" d="M4 7.5h8M4 11.5h8M9.5 6v3M6.5 10v3" />
      </Icon>
    </button>
    <button aria-label="Styles">
      <Icon>
        <Glyph x="6" y="12" s="15">A</Glyph>
        <path fill="#fff" d="M9 10.5l5-6c1-.5 1.500 0 1 1.500l-4 6z" />
        <path stroke="#2b7fc4" fill="#3d98db" d="M5 14.5c2 0 2-3.500 4-3.500s3 3.500-4 3.500z" />
      </Icon>
    </button>
    <button aria-label="Gallery">
      <Icon>
        <path stroke="#dd9a4e" fill="#fcdfae" d="M1.5 13.5v-12h4.500l1 2h7.500v10z" />
        <path fill="#fff" d="M6.5 6.5h9v8h-9z" />
        <path stroke="none" fill="#2f8fd8" d="M7 14v-3l2-1 2 1 2.500-2.500L15 10v4z" />
      </Icon>
    </button>
    <button aria-label="Navigator">
      <Icon>
        <circle cx="8" cy="8" r="6.5" fill="#fff" />
        <path stroke="#2b7fc4" fill="#3d98db" d="M11.5 4.5L9.500 9.500l-5 2 2-5z" />
        <circle cx="8" cy="8" r="1" fill="#fff" stroke="none" />
      </Icon>
    </button>
    <button aria-label="Functions">
      <Icon><Glyph x="8" y="13" s="17" fill="#3d98db" italic serif>fx</Glyph></Icon>
    </button>
    <button aria-label="Hide sidebar" className="absolute top-[268px] -left-px flex h-[50px] w-[5px] items-center justify-center bg-[#929190]">
      <svg viewBox="0 0 3 4" className="h-1 w-[3px]" fill="#fff"><path d="M0 0l3 2-3 2z" /></svg>
    </button>
  </aside>
);

const tabs = ["Agenda_2026", "Resumo_Mensal", "Instrucoes"];

const SheetTabs = () => {
  const [active, setActive] = useState("Resumo_Mensal");
  return (
    <div className="flex h-4 shrink-0 items-stretch pl-1.5 text-[8px] text-[#4a4a4a]">
      <button aria-label="Scroll sheets" className="mr-2 flex items-center">
        <svg viewBox="0 0 60 12" className="h-3 w-[60px]" fill="#fafafa" stroke="#cfcdcb">
          <path d="M.5 0v12M11.5 1L3 6l8.500 5V8.500L7.500 6l4-2.500z" />
          <path d="M21 2.5L15 6l6 3.500zM28.500 2.500l-6 3.500 6 3.500zM31.500 2.500l6 3.500-6 3.500zM39 2.500l6 3.500-6 3.500z" />
          <path d="M59.5 0v12M48.5 1L57 6l-8.500 5V8.500L52.500 6l-4-2.500z" />
        </svg>
      </button>
      <button aria-label="Add Sheet" className="mr-1 flex items-center">
        <svg viewBox="0 0 14 14" className="size-3.5">
          <path d="M.5 0v13.500h10V0" fill="#fff" stroke="#dcdad8" />
          <circle cx="10.5" cy="6.5" r="2.5" fill="#2b6cb8" />
          <path d="M9 6.5h3M10.5 5v3" stroke="#fff" />
        </svg>
      </button>
      <div role="tablist" className="flex">
        {tabs.map((tab) => (
          <button
            key={tab}
            role="tab"
            aria-selected={tab === active}
            onClick={() => setActive(tab)}
            className={clsx(
              "border-r border-[#d6d4d2] px-2 leading-[13px]",
              tab === active && "border-b-2 border-b-[#858483] bg-white font-bold text-[#2f2f2f]",
            )}
          >
            {tab}
          </button>
        ))}
      </div>
    </div>
  );
};

const StatusBar = () => (
  <footer className="flex h-[17px] shrink-0 items-center border-t border-[#d4d2d0] text-[8px] text-[#454444]">
    <span className="flex w-[27px] items-center pl-1.5">
      <Icon size="size-3">
        <path stroke="#8b8a88" d="M1 1h14v14H3l-2-2zM4.5 1v5h7V1M4.5 15v-5h7v5" />
      </Icon>
    </span>
    <span className="w-[148px]">Sheet 2 of 3</span>
    <span className="w-[218px] border-l border-[#e3e1df] pl-1.5">Selected: 1 row, 5 columns</span>
    <span className="w-[217px] border-l border-[#e3e1df] pl-1.5">PageStyle_Resumo_Mensal</span>
    <span className="w-[165px] border-l border-[#e3e1df] text-center">English (USA)</span>
    <span className="h-3 w-[46px] border-l border-[#e3e1df]" />
    <span className="flex w-[31px] items-center border-l border-[#e3e1df] pl-1.5">
      <svg viewBox="0 0 20 12" className="h-3 w-5" fill="none">
        <path stroke="#4ba3d8" d="M.5 3.5h11v6H.5z" />
        <path stroke="#3e3e3e" d="M14.5 1.5h4M14.5 10.5h4M16.5 1.5v9" />
      </svg>
    </span>
    <span className="h-3 w-5 border-l border-[#e3e1df]" />
    <span className="h-3 w-5 border-l border-[#e3e1df]" />
    <span className="flex-1 border-l border-[#e3e1df] text-center">Average: ; Sum: 0</span>
    <div className="flex w-[101px] items-center border-l border-[#e3e1df] pl-1.5">
      <button aria-label="Zoom Out" className="mr-1">
        <svg viewBox="0 0 7 7" className="size-[7px]" stroke="#2b2b2b" strokeWidth="1.5"><path d="M0 3.5h7" /></svg>
      </button>
      <input
        type="range"
        aria-label="Zoom"
        min="0"
        max="100"
        defaultValue="49"
        className="h-px w-[65px] appearance-none bg-[#9b9a98] [&::-webkit-slider-thumb]:h-2 [&::-webkit-slider-thumb]:w-[3px] [&::-webkit-slider-thumb]:appearance-none [&::-webkit-slider-thumb]:border [&::-webkit-slider-thumb]:border-[#4a4a4a] [&::-webkit-slider-thumb]:bg-white"
      />
      <button aria-label="Zoom In" className="ml-1">
        <svg viewBox="0 0 7 7" className="size-[7px]" stroke="#2b2b2b" strokeWidth="1.5"><path d="M0 3.5h7M3.5 0v7" /></svg>
      </button>
    </div>
    <span className="w-7">100%</span>
  </footer>
);

const App = () => {
  return (
    <div className="flex h-screen w-full flex-col overflow-hidden bg-[#f6f5f3] font-['Noto_Sans',sans-serif] text-[9px] leading-[12px]">
      <nav className="flex h-[17px] shrink-0 items-center border-b border-[#e8e6e4] pl-1.5 text-[#333]">
        <div className="flex gap-[11px]">
          {menus.map((m) => (
            <button key={m}>{m}</button>
          ))}
        </div>
        <button aria-label="Close Document" className="mr-2 ml-auto">
          <svg viewBox="0 0 6 6" className="size-1.5" stroke="#2b2b2b" strokeWidth="1.5"><path d="M.5.5l5 5M5.5.5l-5 5" /></svg>
        </button>
      </nav>
      <StandardBar />
      <FormattingBar />
      <div className="flex min-h-0 flex-1">
        <main className="flex min-w-0 flex-1 flex-col">
          <FormulaBar />
          <div className="flex min-h-0 flex-1">
            <div className="relative min-w-0 flex-1 overflow-hidden">
              <Grid />
              <BarChart />
              <PieChart />
            </div>
            <div className="flex w-[9px] flex-col items-center bg-[#cdcdcc] pt-0.5">
              <span className="h-px w-[7px] bg-[#3a3a3a]" />
              <span className="mt-0.5 h-[253px] w-[5px] rounded-full bg-[#80807e]" />
            </div>
          </div>
          <div className="mr-[9px] flex h-2.5 shrink-0 items-center justify-between bg-[#cdcdcc] px-0.5">
            <span className="h-1.5 w-[544px] rounded-full bg-[#80807e]" />
            <span className="h-[7px] w-0.5 bg-[#4a4a4a]" />
          </div>
          <SheetTabs />
        </main>
        <Sidebar />
      </div>
      <StatusBar />
    </div>
  );
};

export default App;
